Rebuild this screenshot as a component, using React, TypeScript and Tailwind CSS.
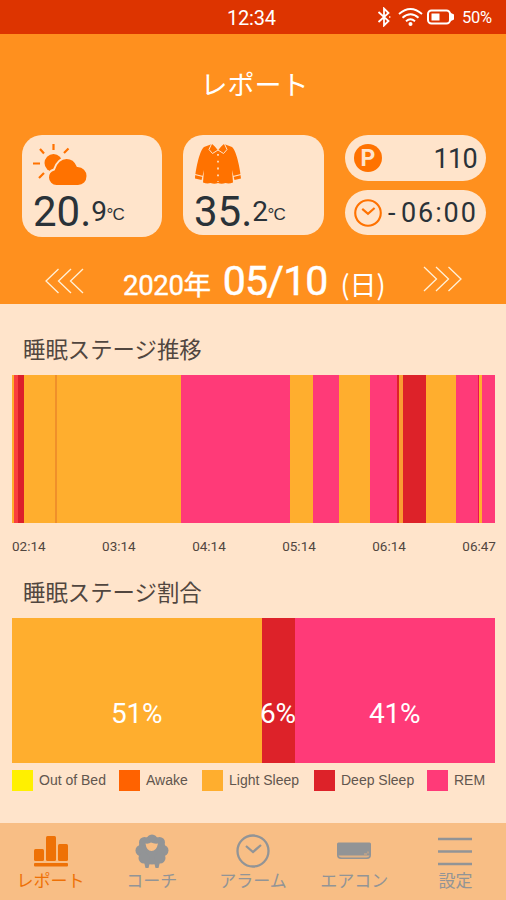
import type { ReactNode } from "react"

const stages = [
  { color: "bg-[#ffae2e]", width: 2 },
  { color: "bg-[#f9403f]", width: 4 },
  { color: "bg-[#dc1f2b]", width: 6 },
  { color: "bg-[#ffae2e]", width: 31 },
  { color: "bg-[#f0902a]", width: 1.5 },
  { color: "bg-[#ffae2e]", width: 124.5 },
  { color: "bg-[#ff3a78]", width: 109 },
  { color: "bg-[#ffae2e]", width: 23 },
  { color: "bg-[#ff3a78]", width: 25.5 },
  { color: "bg-[#ffae2e]", width: 31 },
  { color: "bg-[#ff3a78]", width: 27 },
  { color: "bg-[#dd2229]", width: 2 },
  { color: "bg-[#fb9c33]", width: 4 },
  { color: "bg-[#dd2229]", width: 23.5 },
  { color: "bg-[#ffae2e]", width: 30 },
  { color: "bg-[#ff3a78]", width: 22 },
  { color: "bg-[#e9134f]", width: 1 },
  { color: "bg-[#ffae2e]", width: 3 },
  { color: "bg-[#ff3a78]", width: 13 },
]

const times = ["02:14", "03:14", "04:14", "05:14", "06:14", "06:47"]

const shares = [
  { label: "51%", color: "bg-[#ffae2e]", width: 249.5 },
  { label: "6%", color: "bg-[#dd2229]", width: 33 },
  { label: "41%", color: "bg-[#ff3a78]", width: 200.5 },
]

const legend = [
  { label: "Out of Bed", color: "bg-[#fff000]", width: "w-[107px]" },
  { label: "Awake", color: "bg-[#ff6200]", width: "w-[83px]" },
  { label: "Light Sleep", color: "bg-[#ffae2e]", width: "w-[112px]" },
  { label: "Deep Sleep", color: "bg-[#dd2229]", width: "w-[113px]" },
  { label: "REM", color: "bg-[#ff3a78]", width: "w-[60px]" },
]

function StatusBar() {
  return (
    <header className="flex h-[34px] items-center bg-[#dd3400] text-white">
      <span className="mt-[2px] ml-[227px] w-[150px] font-['Roboto',sans-serif] text-[20px] leading-none tracking-[-0.2px]">12:34</span>
      <svg width="14" height="20" viewBox="0 0 14 20" fill="none" stroke="currentColor" strokeWidth="1.8">
        <path d="m1.500 5 10 9L7 18.500v-17L11.500 6l-10 9" />
        <path d="M12.300 10h1" />
      </svg>
      <svg className="ml-[7px]" width="25" height="20" viewBox="0 0 25 20" fill="none" stroke="currentColor" strokeWidth="1.9">
        <path d="M1 7q11.500-10 23 0" />
        <path d="M4.500 10.700q8-7 16 0" />
        <path d="M8 14.200q4.500-4 9 0" />
        <circle cx="12.500" cy="17" r="2" fill="currentColor" stroke="none" />
      </svg>
      <svg className="ml-1" width="28" height="16" viewBox="0 0 28 16">
        <rect x="1" y="1.500" width="22" height="13" rx="3.500" fill="none" stroke="currentColor" strokeWidth="2" />
        <rect x="4.500" y="4.500" width="8" height="7" fill="currentColor" />
        <path d="M23 3.500 27 5.500v5l-4 2z" fill="currentColor" />
      </svg>
      <span className="mt-[3px] ml-[7px] font-['Roboto',sans-serif] text-[16.5px] leading-none tracking-[-0.3px]">50%</span>
    </header>
  )
}

function WeatherIcon() {
  return (
    <svg className="block" width="56" height="44" viewBox="0 0 56 44" fill="#ff7200">
      <circle cx="20.500" cy="19" r="9" />
      <path d="M20.500 0v6M7 5l4 4.500M0 19.500h7M6 34l5-5M31 9l4.500-4.500" stroke="#ff7200" strokeWidth="2.2" fill="none" />
      <path
        d="M23.500 42a8.500 8.500 0 0 1-8.500-8.500c0-4 2.500-7 6-8C23 18.500 28 14 33.500 14c5 0 9 3 11 8 6 0 10 4.500 10 10 0 6-4 10-9.500 10z"
        stroke="#ffe4cb"
        strokeWidth="2"
      />
    </svg>
  )
}

function ShirtIcon() {
  return (
    <svg className="block" width="48" height="42" viewBox="0 0 48 42" fill="#ff7200">
      <path d="M18 1 10 4C6 7 2 24 1 35.500l6.500 1.500L10 27l-1 12.500q4 1.500 7.500.5 4 1.500 7.500 0 3.500 1.500 7.500 0 3.500 1 7.500-.5L38 27l2.500 10 6.500-1.500C46 24 42 7 38 4L30 1l-6 5z" />
      <path d="M19 1h10l-5 6.500z" fill="#ffe4cb" />
      <path d="m17.500 1-2.500 5.500 3.500 4L24 7l5.500 3.500 3.500-4L30.500 1" stroke="#ffe4cb" strokeWidth="1" fill="none" />
      <path d="m1 31.500 8 2M47 31.500l-8 2" stroke="#ffe4cb" strokeWidth="1.2" fill="none" />
      <path d="M24 11v28" stroke="#ffe4cb" strokeWidth="1.7" strokeDasharray="1.800 5" fill="none" />
    </svg>
  )
}

function ClockIcon({ size, width }: { size: number; width: number }) {
  return (
    <svg className="block" width={size} height={size} viewBox="0 0 34 34" fill="none" stroke="currentColor" strokeWidth={width}>
      <circle cx="17" cy="17" r="15.500" />
      <path d="m10 12 7 6 8-7" />
    </svg>
  )
}

function Temperature({ whole, decimal }: { whole: string; decimal: string }) {
  return (
    <div className="flex items-baseline whitespace-nowrap font-['Roboto',sans-serif] leading-[42px] text-[#2a3238]">
      <span className="text-[42px]">{whole}.</span>
      <span className="relative -top-[5px] text-[28px] tracking-[-0.5px]">{decimal}</span>
      <span className="relative -top-[6px] font-['Liberation_Sans',sans-serif] text-[17px] tracking-[-0.8px]">°C</span>
    </div>
  )
}

function Chevrons({ flipped }: { flipped?: boolean }) {
  return (
    <svg className={flipped ? "block -scale-x-100" : "block"} width="39" height="26" viewBox="0 0 39 26" fill="none" stroke="#fff1d8" strokeWidth="1.3">
      <path d="M13.500 1 1 13l12.500 12M26 1 13.500 13 26 25M38 1 25.500 13 38 25" />
    </svg>
  )
}

function Summary() {
  return (
    <section className="h-[270px] bg-[#ff901e]">
      <h1 className="pt-[30px] pl-[3px] text-center text-[27px] leading-[40px] text-white">レポート</h1>
      <div className="mt-[31px] flex pl-[22px]">
        <div className="h-[102px] w-[140px] rounded-[20px] bg-[#ffe4cb] pt-[9px] pl-[11px]">
          <WeatherIcon />
          <div className="mt-[3px]"><Temperature whole="20" decimal="9" /></div>
        </div>
        <div className="ml-[21px] h-[100px] w-[141px] rounded-[20px] bg-[#ffe4cb] pt-[8px] pl-[11px]">
          <ShirtIcon />
          <div className="mt-[6px]"><Temperature whole="35" decimal="2" /></div>
        </div>
        <div className="ml-[21px] flex w-[141px] flex-col gap-[9px] font-['Roboto',sans-serif] text-[27px] leading-none text-[#2a3238]">
          <div className="flex h-[46px] items-center justify-between rounded-full bg-[#ffe4cb] pr-[9px] pl-[9px]">
            <span className="flex h-7 w-7 items-center justify-center rounded-full bg-[#ff7200] text-[23px] font-bold text-[#ffe4cb]">P</span>
            <span className="mt-[2px] tracking-[-0.7px]">110</span>
          </div>
          <div className="flex h-[45px] items-center rounded-full bg-[#ffe4cb] pl-[9px]">
            <span className="text-[#ff7200]"><ClockIcon size={28} width={2.6} /></span>
            <span className="mt-[2px] ml-[6px] w-[13px]">-</span>
            <span className="mt-[2px] tracking-[1.9px]">06:00</span>
          </div>
        </div>
      </div>
      <div className="flex pt-[20px] pl-[45px] text-white">
        <div className="mt-[11px]"><Chevrons /></div>
        <div className="mt-[2px] ml-[39px] flex w-[301px] items-baseline whitespace-nowrap leading-[44px]">
          <span className="font-['Roboto','Noto_Sans_CJK_JP',sans-serif] text-[27.5px] tracking-[-0.3px] [-webkit-text-stroke:0.4px_white]">2020年</span>
          <span className="ml-[12px] font-['Roboto',sans-serif] text-[41px] tracking-[-0.9px] [-webkit-text-stroke:0.5px_white]">05/10</span>
          <span className="ml-[13px] text-[27px]">(日)</span>
        </div>
        <div className="-ml-[1px] mt-[9px]"><Chevrons flipped /></div>
      </div>
    </section>
  )
}

function Charts() {
  return (
    <main className="h-[519px] bg-[#ffe4cb] px-[12px]">
      <h2 className="pt-[28px] pl-[11px] text-[22.4px] leading-[32px] text-[#51463f]">睡眠ステージ推移</h2>
      <div className="mt-[11px] flex h-[148px]">
        {stages.map((stage, index) => (
          <div key={index} className={`shrink-0 ${stage.color}`} style={{ width: stage.width }} />
        ))}
      </div>
      <div className="mt-[15px] flex w-[484px] justify-between font-['Roboto',sans-serif] text-[13.5px] leading-[16px] text-[#51463f]">
        {times.map((time) => (
          <span key={time}>{time}</span>
        ))}
      </div>
      <h2 className="mt-[21px] pl-[11px] text-[22.4px] leading-[32px] text-[#51463f]">睡眠ステージ割合</h2>
      <div className="mt-[11px] flex h-[145px]">
        {shares.map((share) => (
          <div
            key={share.label}
            className={`flex shrink-0 justify-center pt-[82px] font-['Roboto',sans-serif] text-[28px] leading-[28px] tracking-[-0.2px] text-white ${share.color}`}
            style={{ width: share.width }}
          >
            <span>{share.label}</span>
          </div>
        ))}
      </div>
      <div className="mt-[7px] flex">
        {legend.map((item) => (
          <div key={item.label} className={`flex shrink-0 items-center ${item.width}`}>
            <div className={`h-[21px] w-[21px] ${item.color}`} />
            <span className="-mt-[2px] ml-[6px] whitespace-nowrap font-['Liberation_Sans',sans-serif] text-[14px] leading-none text-[#62564e]">{item.label}</span>
          </div>
        ))}
      </div>
    </main>
  )
}

function NavItem({ label, active, children }: { label: string; active?: boolean; children: ReactNode }) {
  return (
    <div className={`flex flex-1 flex-col items-center pt-[11px] ${active ? "text-[#ee7106]" : "text-[#929496]"}`}>
      <div className="flex h-[34px] items-center">{children}</div>
      <span className="whitespace-nowrap text-[17px] leading-[24px]">{label}</span>
    </div>
  )
}

function BottomNav() {
  return (
    <nav className="flex h-[77px] bg-[#f8be85]">
      <NavItem label="レポート" active>
        <svg width="34" height="34" viewBox="0 0 34 34" fill="currentColor">
          <rect y="15" width="10" height="12" rx="1.500" />
          <rect x="12" y="2" width="10" height="25" rx="1.500" />
          <rect x="24" y="10" width="10" height="17" rx="1.500" />
          <rect y="29" width="34" height="3.500" rx="1" />
        </svg>
      </NavItem>
      <NavItem label="コーチ">
        <svg width="34" height="34" viewBox="0 0 34 34" fill="currentColor">
          <circle cx="17" cy="16.500" r="14" />
          <circle cx="17" cy="6" r="5.500" />
          <circle cx="9.500" cy="8.500" r="5.500" />
          <circle cx="24.500" cy="8.500" r="5.500" />
          <circle cx="6" cy="16.500" r="5.500" />
          <circle cx="28" cy="16.500" r="5.500" />
          <circle cx="9" cy="24" r="5.500" />
          <circle cx="25" cy="24" r="5.500" />
          <path d="M9 28h6l-1.500 6h-3zM19 28h6l-1.500 6h-3z" />
          <path d="M10.500 9.500q3.500.5 5.500-1 3 1.500 7 1-1.500 7.500-6.500 7.500t-6-7.500" fill="#f8be85" />
        </svg>
      </NavItem>
      <NavItem label="アラーム">
        <ClockIcon size={34} width={2.3} />
      </NavItem>
      <NavItem label="エアコン">
        <svg width="34" height="18" viewBox="0 0 34 18">
          <path d="M0 2q0-1.500 1.500-1.500h31Q34 .5 34 2v11q0 4-4 4H4q-4 0-4-4z" fill="currentColor" />
          <path d="M1.500 13.500h31q-.5 2-3 2h-25q-2.500 0-3-2" fill="#e0b184" />
          <path d="M27 12h3M31 9.500v2" stroke="#d9ac83" />
        </svg>
      </NavItem>
      <NavItem label="設定">
        <svg width="34" height="34" viewBox="0 0 34 34" stroke="currentColor" strokeWidth="2.6">
          <path d="M0 5h34M0 17.500h34M0 30h34" />
        </svg>
      </NavItem>
    </nav>
  )
}

export default function App() {
  return (
    <div className="h-[900px] w-[506px] overflow-hidden font-['Noto_Sans_CJK_JP',sans-serif]">
      <StatusBar />
      <Summary />
      <Charts />
      <BottomNav />
    </div>
  )
}
